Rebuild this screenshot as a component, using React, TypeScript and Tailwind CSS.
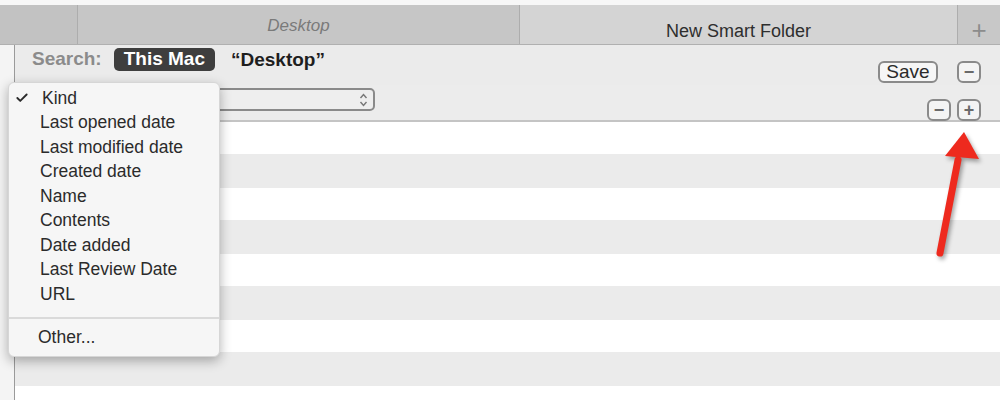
import { Check } from "lucide-react";

const menuItems = [
  "Last opened date",
  "Last modified date",
  "Created date",
  "Name",
  "Contents",
  "Date added",
  "Last Review Date",
  "URL",
];

function RoundButton({ children }: { children: React.ReactNode }) {
  return (
    <div className="w-[24px] h-[22px] rounded-[6px] border-2 border-[#8a8a8a] bg-[#f4f4f4] flex items-center justify-center text-[#6a6a6a] text-[18px] leading-none font-bold">
      {children}
    </div>
  );
}

export default function App() {
  const stripes = Array.from({ length: 9 });

  return (
    <div className="relative w-[1000px] h-[400px] overflow-hidden bg-white font-['Liberation_Sans',Arial,sans-serif]">
      {/* tab bar */}
      <div className="h-[5px] bg-[#f7f7f7]" />
      <div className="flex h-[40px] bg-[#c6c6c6] border-b border-[#b0b0b0]">
        <div className="w-[78px] bg-[#c2c2c2] border-r border-[#adadad]" />
        <div className="w-[442px] flex items-center justify-center bg-[#c6c6c6] border-r border-[#adadad] pt-[3px]">
          <span className="italic text-[17px] text-[#7a7a7a]">Desktop</span>
        </div>
        <div className="flex-1 flex items-center justify-center bg-[#d4d4d4] pt-[14px]">
          <span className="text-[18px] text-[#2e2e2e]">New Smart Folder</span>
        </div>
        <div className="w-[43px] flex items-center justify-center bg-[#c8c8c8] border-l border-[#adadad] text-[#8c8c8c] text-[26px] font-light pt-[12px]">
          +
        </div>
      </div>

      {/* body */}
      <div className="flex">
        <div className="w-[15px] bg-[#f4f4f4] border-r border-[#9a9a9a] h-[360px]" />
        <div className="flex-1">
          {/* search bar */}
          <div className="h-[40px] bg-[#ebebeb] flex items-center pl-[17px] pr-[19px]">
            <span className="text-[19px] font-bold text-[#8b8b8b] -mt-[12px]">Search:</span>
            <span className="ml-[12px] -mt-[12px] px-[10px] h-[23px] flex items-center rounded-[5px] bg-[#3e3e3e] text-white text-[19px] font-bold">
              This Mac
            </span>
            <span className="ml-[16px] -mt-[10px] text-[19px] font-bold text-[#1e1e1e]">“Desktop”</span>
            <div className="ml-auto flex items-center gap-[19px] mt-[14px]">
              <div className="w-[60px] h-[22px] rounded-[6px] border-2 border-[#8a8a8a] bg-[#f6f6f6] flex items-center justify-center text-[19px] text-[#2a2a2a]">
                Save
              </div>
              <RoundButton>−</RoundButton>
            </div>
          </div>

          {/* criteria row */}
          <div className="h-[37px] bg-[#ececec] border-b-2 border-[#c4c4c4] flex items-center pl-[15px] pr-[19px]">
            <div className="w-[345px] h-[23px] -mt-[6px] rounded-[5px] border-2 border-[#8a8a8a] bg-[#eeeeee] flex items-center justify-end pr-[5px]">
              <svg width="9" height="16" viewBox="0 0 9 16" className="text-[#777]">
                <path d="M1.5 6 L4.5 2.5 L7.5 6" fill="none" stroke="currentColor" strokeWidth="1.4" />
                <path d="M1.5 10 L4.5 13.5 L7.5 10" fill="none" stroke="currentColor" strokeWidth="1.4" />
              </svg>
            </div>
            <div className="ml-auto flex items-center gap-[6px] mt-[14px]">
              <RoundButton>−</RoundButton>
              <RoundButton>+</RoundButton>
            </div>
          </div>

          {/* striped results */}
          <div>
            {stripes.map((_, i) => (
              <div key={i} className={i % 2 === 0 ? "h-[32px] bg-white" : "h-[34px] bg-[#ebebeb]"} />
            ))}
          </div>
        </div>
      </div>

      {/* popup menu */}
      <div className="absolute left-[8px] top-[82px] w-[212px] h-[275px] rounded-[6px] bg-[#f6f6f6] shadow-[0_4px_12px_rgba(0,0,0,0.3)] border border-[#d6d6d6] pt-[3px]">
        <div className="flex items-center h-[24px] text-[17.5px] text-[#2b2b2b]">
          <Check className="w-[14px] h-[14px] ml-[6px] mr-[13px] text-[#2b2b2b]" strokeWidth={3.2} />
          <span>Kind</span>
        </div>
        {menuItems.map((label) => (
          <div key={label} className="flex items-center h-[24.5px] pl-[31px] text-[17.5px] text-[#2b2b2b]">
            {label}
          </div>
        ))}
        <div className="mt-[11px] mb-[6px] h-[2px] bg-[#dadada]" />
        <div className="flex items-center h-[24px] pl-[29px] text-[17.5px] text-[#2b2b2b]">Other...</div>
      </div>

      {/* red arrow */}
      <svg className="absolute left-[915px] top-[125px] drop-shadow-[2px_3px_2px_rgba(0,0,0,0.35)]" width="80" height="140" viewBox="0 0 80 140">
        <path d="M25 128 L43 35" stroke="#ee2a1e" strokeWidth="7" strokeLinecap="round" fill="none" />
        <path d="M49 7 L64 34 L30 31 Z" fill="#ee2a1e" />
      </svg>
    </div>
  );
}
